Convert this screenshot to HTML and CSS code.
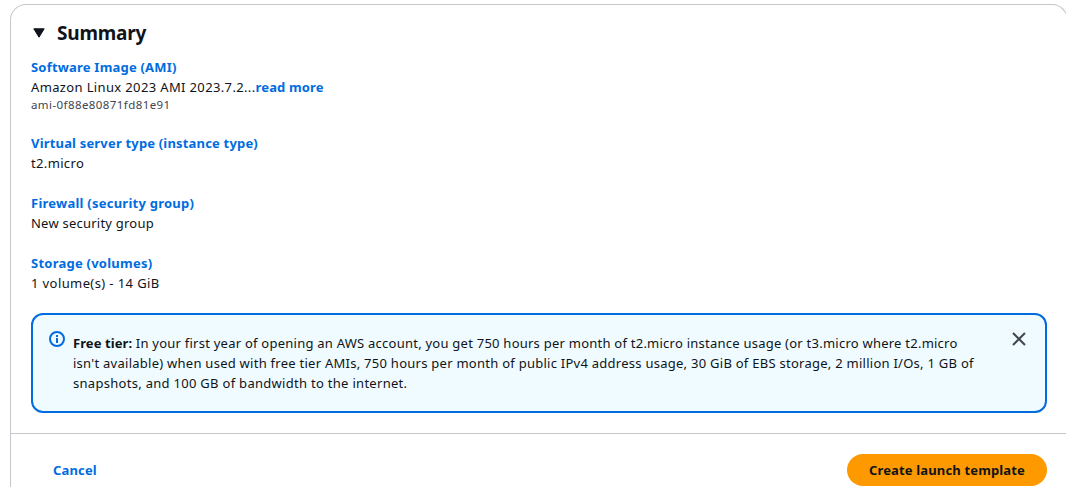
FILE: index.html
```
<!DOCTYPE html>
<html lang="en">
<head>
<meta charset="utf-8">
<title>Summary</title>
<link rel="stylesheet" href="styles.css">
</head>
<body>
<section class="card">
  <div class="content">
    <h2 class="heading">
      <svg class="caret" width="12" height="10" viewBox="0 0 12 10"><path d="M0.8 0.8H11.2L6 9.2Z" fill="#0f141a" stroke="#0f141a" stroke-linejoin="round"/></svg>
      <span class="title">Summary</span>
    </h2>
    <div class="item ami">
      <a class="link l-ami">Software Image (AMI)</a>
      <div class="value"><span class="v-ami">Amazon Linux 2023 AMI 2023.7.2...</span><a class="link l-more">read more</a></div>
      <div class="small">ami-0f88e80871fd81e91</div>
    </div>
    <div class="item">
      <a class="link l-type">Virtual server type (instance type)</a>
      <div class="value v-type">t2.micro</div>
    </div>
    <div class="item">
      <a class="link l-fire">Firewall (security group)</a>
      <div class="value v-fire">New security group</div>
    </div>
    <div class="item last">
      <a class="link l-store">Storage (volumes)</a>
      <div class="value v-store">1 volume(s) - 14 GiB</div>
    </div>
    <div class="alert">
      <svg class="info" width="16" height="16" viewBox="0 0 16 16" fill="none" stroke="#006ce0" stroke-width="2"><circle cx="8" cy="8" r="7"/><path d="M8 12V7M8 6V4"/></svg>
      <div class="message">
        <div class="m1"><b>Free tier:</b> In your first year of opening an AWS account, you get 750 hours per month of t2.micro instance usage (or t3.micro where t2.micro</div>
        <div class="m2">isn't available) when used with free tier AMIs, 750 hours per month of public IPv4 address usage, 30 GiB of EBS storage, 2 million I/Os, 1 GB of</div>
        <div class="m3">snapshots, and 100 GB of bandwidth to the internet.</div>
      </div>
      <svg class="close" width="16" height="16" viewBox="0 0 16 16" fill="none" stroke="#424650" stroke-width="2"><path d="M2 2L14 14M14 2L2 14"/></svg>
    </div>
  </div>
  <div class="footer">
    <a class="link cancel">Cancel</a>
    <button class="primary">Create launch template</button>
  </div>
</section>
</body>
</html>
```
FILE: styles.css
```
* { box-sizing: border-box; }
body {
  margin: 0;
  height: 487px;
  overflow: hidden;
  padding: 4px 0 0 10px;
  background: #fff;
  color: #0f141a;
  font: 13px/20px "Noto Sans", sans-serif;
  white-space: nowrap;
}
.card {
  width: 1058px;
  height: 483px;
  border: 1px solid #c6c6cd;
  border-bottom: 0;
  border-radius: 16px 16px 0 0;
}
.content { padding: 16px 20px 20px; }
.heading {
  display: flex;
  align-items: center;
  gap: 12px;
  height: 24px;
  margin: 0 0 12px;
  padding-left: 2px;
  font-size: 19px;
  line-height: 24px;
  letter-spacing: -0.2px;
}
.caret { display: block; }
.item { height: 60px; }
.ami { height: 76px; }
.last { height: 40px; margin-bottom: 20px; }
.link { display: block; width: max-content; color: #006ce0; font-weight: 700; }
.value { display: flex; }
.small { font-size: 11.5px; line-height: 16px; letter-spacing: 0.42px; color: #424650; }
.l-ami { letter-spacing: 0.2px; }
.v-ami { letter-spacing: 0.36px; }
.l-more { letter-spacing: 0.15px; }
.l-type { letter-spacing: 0.18px; }
.v-type { letter-spacing: 0.35px; }
.l-fire { letter-spacing: 0.24px; }
.v-fire { letter-spacing: 0.23px; }
.l-store { letter-spacing: 0.24px; }
.v-store { letter-spacing: 0.4px; }
.m1 { letter-spacing: 0.24px; }
.m1 b { letter-spacing: 0.08px; }
.m2 { letter-spacing: 0.26px; }
.m3 { letter-spacing: 0.29px; }
.cancel { letter-spacing: 0.15px; }
.alert {
  display: flex;
  height: 100px;
  padding: 16px;
  border: 2px solid #006ce0;
  border-radius: 12px;
  background: #f0fbff;
}
.message { flex: 1; margin: 2px 0 0 8px; }
.close { margin-right: 2px; }
.footer {
  display: flex;
  justify-content: space-between;
  align-items: center;
  border-top: 1px solid #c6c6cd;
  padding: 20px 20px 0 42px;
}
.primary {
  width: 200px;
  height: 32px;
  padding: 0;
  border: 0;
  border-radius: 16px;
  background: #ff9900;
  color: #0f141a;
  font: 700 13px/20px "Noto Sans", sans-serif;
  letter-spacing: 0.15px;
}
```
